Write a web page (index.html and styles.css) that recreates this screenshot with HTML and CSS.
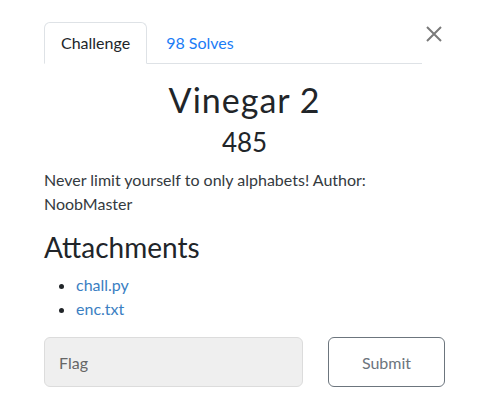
FILE: index.html
```html
<!DOCTYPE html>
<html>
<head>
<meta charset="utf-8">
<link rel="stylesheet" href="styles.css">
</head>
<body>
<div class="modal">
  <div class="header">
    <ul class="tabs">
      <li class="tab active">Challenge</li>
      <li class="tab"><a class="tab-link">98 Solves</a></li>
    </ul>
    <button class="close" aria-label="Close">
      <svg width="16" height="16" viewBox="0 0 16 16"><path d="M1 1L15 15M15 1L1 15" stroke="#7a7a7a" stroke-width="2" fill="none"/></svg>
    </button>
  </div>
  <h2 class="title">Vinegar 2</h2>
  <h3 class="value">485</h3>
  <p class="desc">Never limit yourself to only alphabets! Author: NoobMaster</p>
  <h3 class="att-title">Attachments</h3>
  <ul class="files">
    <li><a class="file-link">chall.py</a></li>
    <li><a class="file-link">enc.txt</a></li>
  </ul>
  <div class="form-row">
    <div class="input">Flag</div>
    <button class="submit">Submit</button>
  </div>
</div>
</body>
</html>
```
FILE: styles.css
```css
* { box-sizing: border-box; }
body {
  margin: 0;
  background: #fff;
  font-family: Lato, "Noto Sans", sans-serif;
  color: #212529;
}
.modal {
  width: 493px;
  padding: 22px 48px 0 44px;
}
.header {
  display: flex;
  align-items: flex-start;
}
.tabs {
  flex: 1;
  display: flex;
  list-style: none;
  margin: 0;
  padding: 0;
  border-bottom: 1px solid #dee2e6;
}
.tab {
  font-size: 16px;
  line-height: 24px;
  padding: 8px 16px;
  margin-bottom: -1px;
  border: 1px solid transparent;
  border-radius: 6px 6px 0 0;
}
.tab + .tab {
  margin-left: 2px;
}
.tab.active {
  border-color: #dee2e6 #dee2e6 #fff;
  background: #fff;
  color: #212529;
}
.tab-link {
  color: #1a7cf6;
}
.close {
  width: 23px;
  height: 24px;
  border: 0;
  background: none;
  padding: 0;
  display: flex;
  align-items: center;
  justify-content: center;
}
.title {
  margin: 15px 0 0;
  text-align: center;
  font-size: 34px;
  font-weight: 400;
  letter-spacing: 1px;
  line-height: 41px;
}
.value {
  margin: 6px 0 0;
  text-align: center;
  font-size: 26px;
  font-weight: 400;
  line-height: 32px;
}
.desc {
  margin: 10px 0 0;
  font-size: 16px;
  line-height: 24px;
  color: #343a40;
}
.att-title {
  margin: 14px 0 0;
  font-size: 28px;
  font-weight: 400;
  line-height: 34px;
}
.files {
  margin: 9px 0 0;
  padding-left: 32px;
  font-size: 16px;
  line-height: 24px;
}
.file-link {
  color: #3a7ec2;
}
.form-row {
  display: flex;
  margin-top: 16px;
  gap: 25px;
}
.input {
  width: 259px;
  height: 50px;
  background: #efefef;
  border: 1px solid #dcdcdc;
  border-radius: 6px;
  padding: 0 14px;
  display: flex;
  align-items: center;
  font-size: 16px;
  color: #666;
}
.submit {
  width: 117px;
  height: 50px;
  background: #fff;
  border: 1px solid #6c757d;
  border-radius: 6px;
  font-family: Lato, "Noto Sans", sans-serif;
  font-size: 16px;
  color: #6c757d;
}
```
